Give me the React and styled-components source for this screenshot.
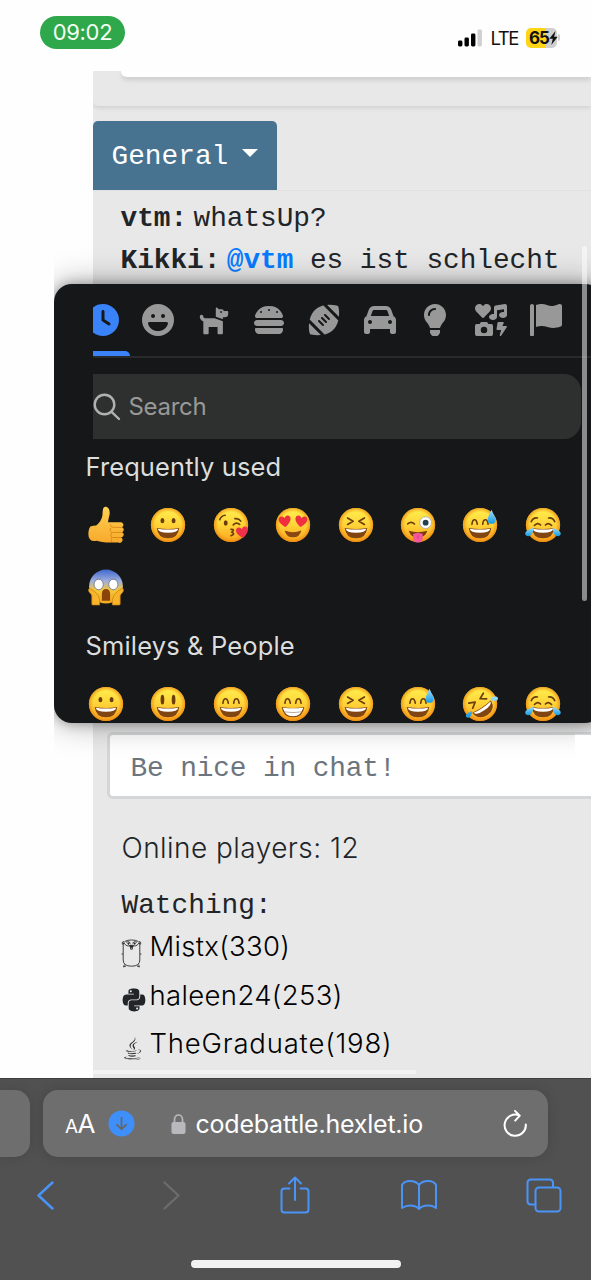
import React from "react";
import styled, { createGlobalStyle } from "styled-components";
import { FaClock, FaFaceLaugh, FaBurger, FaFootball, FaCar, FaPython, FaJava } from "react-icons/fa6";
import { FaDog, FaLightbulb, FaIcons } from "react-icons/fa";

const Global = createGlobalStyle`
  html, body { margin: 0; background: #fefefe; }
  * { box-sizing: border-box; }
  svg { display: block; flex: none; }
`;
const SANS = `Inter, "Liberation Sans", sans-serif`;
const MONO = `"Liberation Mono", monospace`;

const Screen = styled.div`
  position: relative;
  display: flex;
  flex-direction: column;
  width: 591px;
  height: 1280px;
  overflow: hidden;
  background: #fefefe;
  font-family: ${SANS};
`;

/* ---- status bar ---- */
const StatusBar = styled.header`
  display: flex;
  justify-content: space-between;
  align-items: flex-start;
  height: 71px;
  padding: 16px 31px 0 40px;
  flex: none;
`;
const Clock = styled.div`
  width: 85px;
  height: 33px;
  border-radius: 17px;
  background: #2fa84c;
  color: #f4fff4;
  font-size: 22px;
  line-height: 33px;
  text-align: center;
  letter-spacing: -0.35px;
`;
const Status = styled.div`
  display: flex;
  align-items: center;
  margin-top: 11px;
  height: 21px;
`;
const Carrier = styled.span`
  width: 34px;
  padding-left: 6.5px;
  font-size: 18.5px;
  letter-spacing: -1.4px;
  color: #111;
  white-space: nowrap;
`;
const Battery = styled.div`
  display: flex;
  align-items: center;
  width: 31px;
  height: 20px;
  margin-left: 8px;
  padding-left: 3px;
  border-radius: 5px;
  background: linear-gradient(90deg, #ffd414 65%, #cfcfcf 65%);
  font-size: 17px;
  font-weight: 700;
  letter-spacing: -1.1px;
  color: #111;
`;
const BatteryTip = styled.div`
  width: 2px;
  height: 7px;
  margin-left: 1px;
  border-radius: 0 2px 2px 0;
  background: #cfcfcf;
`;

/* ---- page ---- */
const Page = styled.main`
  display: flex;
  flex-direction: column;
  height: 1007px;
  margin-left: 92.5px;
  overflow: hidden;
  background: #e8e8e8;
  flex: none;
`;
const TopPanel = styled.div`
  height: 35px;
  padding-left: 28px;
  overflow: visible;
  border-bottom-left-radius: 5px;
  box-shadow: 0 2px 4px rgba(0, 0, 0, 0.1);
  flex: none;
`;
const TopCard = styled.div`
  height: 6px;
  border-bottom-left-radius: 6px;
  background: #fff;
  box-shadow: 0 3px 5px rgba(0, 0, 0, 0.12);
`;
const TabStrip = styled.div`
  display: flex;
  height: 85px;
  padding-top: 15px;
  border-bottom: 1px solid #e1e1e1;
  flex: none;
`;
const RoomTab = styled.button`
  display: flex;
  align-items: center;
  width: 184.5px;
  height: 69px;
  padding: 2px 0 0 19px;
  border: 0;
  border-radius: 5px 5px 0 0;
  background: #477391;
  color: #fff;
  font: 27.8px/42px ${MONO};
  gap: 14px;
`;
const Caret = styled.i`
  border: 8.5px solid transparent;
  border-top: 8.5px solid #fff;
  border-bottom: 0;
  margin-bottom: 8px;
`;
const Messages = styled.div`
  height: 541px;
  padding: 7px 0 0 28px;
  flex: none;
`;
const Message = styled.div`
  display: flex;
  gap: 6.5px;
  height: 41.7px;
  font: 27.8px/41.7px ${MONO};
  letter-spacing: -0.05px;
  color: #212529;
  white-space: pre;
`;
const Mention = styled.b`
  color: #077bff;
`;
const ChatInput = styled.div`
  width: 520px;
  height: 67px;
  margin-left: 14px;
  padding-left: 21px;
  border: 3px solid #d5d6d7;
  border-radius: 6px;
  background: #fff;
  color: #6c757d;
  font: 27.8px/67px ${MONO};
  letter-spacing: -0.12px;
  flex: none;
`;
const Players = styled.section`
  display: flex;
  flex-direction: column;
  padding: 28px 0 0 29px;
  color: #212529;
  flex: none;
`;
const Online = styled.div`
  height: 42px;
  font-size: 28px;
  line-height: 42px;
  font-weight: 300;
  letter-spacing: 0.45px;
`;
const Watching = styled.div`
  height: 42px;
  margin: 16px 0 -5px;
  font: 27.8px/42px ${MONO};
`;
const Player = styled.div`
  display: flex;
  align-items: center;
  height: 48.5px;
  font-size: 27.5px;
  font-weight: 300;
  line-height: 42px;
  color: #000;
  letter-spacing: ${(p) => p.$spacing}px;
`;
const LangIcon = styled.span`
  display: flex;
  align-items: center;
  width: 29px;
  margin-left: -1px;
  padding-top: ${(p) => p.$drop || 10}px;
  flex: none;
`;
const ScrollTrack = styled.div`
  width: 323px;
  height: 4px;
  margin: auto 0 4px;
  background: #f2f2f2;
`;

/* ---- emoji picker ---- */
const Picker = styled.div`
  position: absolute;
  left: 54px;
  top: 284px;
  display: flex;
  flex-direction: column;
  width: 549px;
  height: 439px;
  padding-left: 31.5px;
  border-radius: 18px;
  background: #151718;
  box-shadow: 0 0 32px rgba(0, 0, 0, 0.35), 0 0 12px rgba(0, 0, 0, 0.3);
  clip-path: polygon(0 -60px, 100% -60px, 100% 450px, 521px 450px, 521px 500px, 0 500px);
`;
const Tabs = styled.nav`
  display: flex;
  height: 74px;
  margin-left: 7px;
  border-bottom: 2px solid #27292a;
  overflow: hidden;
  flex: none;
`;
const Tab = styled.div`
  display: flex;
  flex-direction: column;
  align-items: center;
  justify-content: space-between;
  width: 55.4px;
  margin-left: ${(p) => (p.$active ? -17.3 : 0)}px;
  padding-top: 20px;
  color: ${(p) => (p.$active ? "#3a82f7" : "#989898")};
  flex: none;
`;
const Marker = styled.div`
  width: 55px;
  height: 5px;
  border-radius: 5px 5px 0 0;
  background: #3a82f7;
`;
const Search = styled.div`
  display: flex;
  align-items: center;
  gap: 8px;
  width: 488px;
  height: 65px;
  margin: 16px 0 0 7px;
  border-radius: 0 17px 17px 0;
  background: #2e302f;
  color: #989998;
  font-size: 24px;
  letter-spacing: -0.3px;
  flex: none;
`;
const Heading = styled.h2`
  height: 56px;
  margin: 0;
  font-size: 25.5px;
  font-weight: 400;
  line-height: 56px;
  letter-spacing: ${(p) => p.$spacing}px;
  color: #dcdddd;
  flex: none;
`;
const EmojiGrid = styled.div`
  display: grid;
  grid-template-columns: repeat(8, 62.4px);
  grid-auto-rows: 62px;
  align-items: center;
  height: ${(p) => p.$rows * 62}px;
  margin: -1px 0 0;
  padding-left: 2.5px;
  flex: none;
`;
const Scrollbar = styled.div`
  position: absolute;
  left: 582px;
  top: 246px;
  width: 5px;
  height: 355px;
  border-radius: 3px;
  background: rgba(255, 255, 255, 0.5);
`;

/* ---- browser chrome ---- */
const Browser = styled.footer`
  display: flex;
  flex-direction: column;
  height: 202px;
  background: #515151;
  border-top: 1px solid #3f3f3f;
  flex: none;
`;
const AddressRow = styled.div`
  display: flex;
  gap: 13px;
  padding-top: 11px;
`;
const PrevTab = styled.div`
  width: 30px;
  height: 67px;
  border-radius: 0 15px 15px 0;
  background: #6e6e6e;
  box-shadow: 0 0 14px rgba(0, 0, 0, 0.12);
`;
const Address = styled.div`
  display: flex;
  align-items: center;
  width: 505px;
  height: 67px;
  padding: 0 21px 0 22px;
  border-radius: 15px;
  background: #6e6e6e;
  box-shadow: 0 0 14px rgba(0, 0, 0, 0.14);
  color: #fff;
`;
const TextSize = styled.span`
  display: flex;
  align-items: baseline;
  width: 43px;
  font-size: 26px;
  letter-spacing: -0.5px;
`;
const SmallA = styled.span`
  font-size: 19px;
`;
const Lock = styled.svg`
  margin-left: 36px;
`;
const Url = styled.span`
  flex: 1;
  margin-left: 9.5px;
  font-size: 25px;
  letter-spacing: -0.22px;
`;
const Toolbar = styled.div`
  display: grid;
  grid-template-columns: 127px 125px 122px 125px 125px;
  justify-content: center;
  justify-items: center;
  align-items: center;
  height: 76px;
  padding-right: 3px;
  color: #4a94f8;
`;
const HomeBar = styled.div`
  width: 210px;
  height: 8px;
  margin: 27px 0 0 191px;
  border-radius: 4px;
  background: #f3f3f3;
`;

/* ---- emoji drawings ---- */
const brown = "#6b3d0c";
const line = { fill: "none", stroke: brown, strokeWidth: 1.7, strokeLinecap: "round", strokeLinejoin: "round" };

const Grin = ({ teeth }) => (
  <g>
    <path d="M6.5 21Q18 23 29.5 21Q28.5 31.5 18 31.5Q7.5 31.5 6.5 21Z" fill="#804512" />
    <path d="M7.6 21.8Q18 23.6 28.4 21.8Q28 25.8 18 25.8Q8 25.8 7.6 21.8Z" fill="#fff" />
    {teeth && <path d="M8 21.8Q18 23.6 28 21.8Q27 30.4 18 30.4Q9 30.4 8 21.8Z" fill="#fff" />}
    {teeth && <path d="M8.8 26Q18 27.6 27.2 26" fill="none" stroke="#9c8268" strokeWidth=".7" />}
  </g>
);
const DotEyes = ({ tall }) => (
  <g fill={brown}>
    <ellipse cx="12.3" cy="13.6" rx={tall ? 1.9 : 2} ry={tall ? 5 : 2.7} />
    <ellipse cx="23.7" cy="13.6" rx={tall ? 1.9 : 2} ry={tall ? 5 : 2.7} />
  </g>
);
const ArcEyes = () => (
  <path {...line} d="M9.8 17.2Q10.2 12.6 12.4 12.6T15.2 17.2M20.8 17.2Q21.2 12.6 23.5 12.6T26.2 17.2" />
);
const Drop = () => <path d="M29.8 2.5C28 7 25.8 9.5 25.8 12.8A4 4 0 0 0 33.8 12.8C33.8 9.5 31.5 7 29.8 2.5Z" fill="url(#water)" />;
const heart = "M0 4.8C-8-.5-5.4-5.6-2-4.9Q-.5-4.6 0-3Q.7-4.6 2-4.9C5.5-5.6 8-.5 0 4.8Z";

const features = {
  grinning: <><DotEyes /><Grin /></>,
  smiley: <><DotEyes tall /><Grin /></>,
  smile: <><ArcEyes /><Grin /></>,
  grin: <><ArcEyes /><Grin teeth /></>,
  squint: <><path {...line} d="M9.4 10.8L15 14.2L9.4 17.4M26.6 10.8L21 14.2L26.6 17.4" /><Grin /></>,
  sweat: <><ArcEyes /><Grin /><Drop /></>,
  kiss: <>
    <ellipse cx="12.6" cy="16" rx="2" ry="2.8" fill={brown} />
    <path {...line} d="M6.5 12.5Q8 8.4 12 8M22 11.5Q26 11 28 14M20.3 17.8Q23.5 14.6 26.8 17.4M18 22.5Q22.5 22.4 18.8 25.4Q23 27 18 29" />
    <path d={heart} transform="translate(29.6 25.8) rotate(-10) scale(1.15)" fill="#ee3048" />
  </>,
  love: <>
    <path d={heart} transform="translate(9.8 14.5) rotate(-8) scale(1.15)" fill="#f0303f" />
    <path d={heart} transform="translate(26.2 14.5) rotate(8) scale(1.15)" fill="#f0303f" />
    <path d="M9.5 23.6Q18 27 26.5 23.6Q25 30.6 18 30.6Q11 30.6 9.5 23.6Z" fill="#8a4712" />
  </>,
  wink: <>
    <path {...line} d="M7.5 16.8Q11 13.6 14.4 17" />
    <circle cx="25.8" cy="15.6" r="6" fill="#fff" stroke="#a8aeb4" strokeWidth=".9" />
    <circle cx="25.8" cy="15.6" r="3" fill="#25404c" />
    <path d="M8.5 24Q18 27 27.5 24Q25.5 31 18 31Q10.5 31 8.5 24Z" fill="#7b3d10" />
    <path d="M13 27.2Q18 25 22.8 27.2V32Q22.2 36 18 36T13 32Z" fill="#f5599c" />
    <path d="M18 28.4V32" stroke="#cc3479" strokeWidth=".9" />
  </>,
  joy: <>
    <path {...line} d="M6 14.5Q8.2 10 12.3 10.8M30 14.5Q27.8 10 23.7 10.8M9.2 18.5Q12.5 14.8 15.5 18M26.8 18.5Q23.5 14.8 20.5 18" />
    <Grin />
    <path d="M8 20.4C8.4 25.6 6.4 29.4 2.8 29.4C-.6 29.4-1 25.8 1.4 24.2C4 22.8 6 22.4 8 20.4ZM28 20.4C27.6 25.6 29.6 29.4 33.2 29.4C36.6 29.4 37 25.8 34.6 24.2C32 22.8 30 22.4 28 20.4Z" fill="url(#water)" />
  </>,
  rofl: <>
    <g transform="rotate(-34 18 18)">
      <path {...line} d="M9 10.8L15 13.6L9.4 17.4M27 10.8L21 13.6L26.6 17.4" />
      <Grin />
    </g>
    <path d="M28.4 13C30.5 9.6 36.2 9.8 36.4 12.2C36.6 15.4 31.8 16 28.4 13ZM9.6 25.2C10.6 29.2 7.4 33 4.8 31.8C1.6 30.2 5 26.8 9.6 25.2Z" fill="url(#water)" />
  </>,
};

const Emoji = ({ name }) => (
  <svg width="36" height="36" viewBox="-.4 -.4 36.8 36.8" overflow="visible">
    {name === "thumb" && (
      <g>
        <path d="M2 19.5Q5 18.6 8 18.6Q13.5 14 14.4 8C14.6 3.8 14.6 0 17 -.6C20.6-1.4 22.4 3.6 21.6 7.5Q20.6 11.4 20 15.2H32.6A2.7 2.7 0 0 1 34.4 20.2A2.8 2.8 0 0 1 34.4 25.4A2.7 2.7 0 0 1 33.2 30.6A2.6 2.6 0 0 1 30.5 36H18Q12 35.6 8.5 34.2Q0 35.8 0 27.5Q0 22 2 19.5Z" fill="url(#hand)" />
        <path d="M34 20.4H25.5Q22.8 20.2 22.4 17.4M34 25.6H24.5M33 30.8H24.5M23.6 20.8Q20.6 23 24 25.6Q21.4 28 24.2 30.8Q22 33 24 35.4" fill="none" stroke="#d98a14" strokeWidth="1" />
      </g>
    )}
    {name === "scream" && (
      <g>
        <circle cx="18" cy="17.5" r="17.3" fill="url(#fear)" />
        <g fill="#fff" stroke="#6f7584" strokeWidth=".9">
          <ellipse cx="10.5" cy="15.4" rx="4.7" ry="5.4" />
          <ellipse cx="25.5" cy="15.4" rx="4.7" ry="5.4" />
        </g>
        <path d="M13.8 25.5Q13.8 20 18 20T22.2 25.5V32H13.8Z" fill="#8a4308" />
        <path d="M3.5 35.5V26Q-1.6 22 1 19.4Q6 21 10 26.5Q12.4 31 11.5 36.4H4ZM32.5 35.5V26Q37.6 22 35 19.4Q30 21 26 26.5Q23.6 31 24.5 36.4H32Z" fill="#f7b52c" stroke="#c97c11" strokeWidth=".7" />
      </g>
    )}
    {features[name] && (
      <g>
        <circle cx="18" cy="18" r="17.5" fill="url(#face)" />
        <circle cx="18" cy="18" r="17.5" fill="url(#rim)" />
        {features[name]}
      </g>
    )}
  </svg>
);
const PaintDefs = styled.svg`
  position: absolute;
`;
const Paints = () => (
  <PaintDefs width="0" height="0">
    <defs>
      <linearGradient id="face" x2="0" y2="1"><stop stopColor="#fff04f" /><stop offset=".5" stopColor="#ffd338" /><stop offset="1" stopColor="#fba41d" /></linearGradient>
      <radialGradient id="rim"><stop offset=".75" stopColor="#f08c12" stopOpacity="0" /><stop offset="1" stopColor="#ec860c" stopOpacity=".75" /></radialGradient>
      <linearGradient id="hand" x2="0" y2="1"><stop stopColor="#ffd152" /><stop offset="1" stopColor="#f7a92c" /></linearGradient>
      <linearGradient id="fear" x2="0" y2="1"><stop stopColor="#4167cf" /><stop offset=".35" stopColor="#a1b0dd" /><stop offset=".6" stopColor="#f4c63a" /><stop offset="1" stopColor="#f5a91f" /></linearGradient>
      <linearGradient id="water" x2="0" y2="1"><stop stopColor="#9fe0fb" /><stop offset="1" stopColor="#179ae2" /></linearGradient>
    </defs>
  </PaintDefs>
);

const FlagIcon = () => (
  <svg width="32" height="32" viewBox="0 0 512 512" fill="currentColor">
    <path d="M64 496C64 504.8 56.75 512 48 512h-32C7.25 512 0 504.8 0 496V32c0-17.75 14.25-32 32-32s32 14.25 32 32V496zM476.3 0c-6.365 0-13.01 1.35-19.34 4.233c-45.69 20.86-79.56 27.94-107.8 27.94c-59.96 0-94.81-31.86-163.9-31.87C160.9 .3055 131.6 4.867 96 15.75v350.5c32-9.984 59.87-14.1 84.85-14.1c73.63 0 124.9 31.78 198.6 31.78c31.91 0 68.02-5.971 111.1-23.09C504.1 355.9 512 344.4 512 332.1V30.73C512 11.1 495.3 0 476.3 0z" />
  </svg>
);
const categories = [FaFaceLaugh, FaDog, FaBurger, FaFootball, FaCar, FaLightbulb, FaIcons];
const frequent = ["thumb", "grinning", "kiss", "love", "squint", "wink", "sweat", "joy", "scream"];
const people = ["grinning", "smiley", "smile", "grin", "squint", "sweat", "rofl", "joy"];

const Gopher = () => (
  <svg width="21" height="29" viewBox="0 0 21 29" fill="none" stroke="#2b2d30" strokeWidth=".9">
    <path d="M2.2 6Q2 1 10.5 1T18.8 6V21Q18.8 27.2 10.5 27.2T2.2 21Z" />
    <path d="M3 4Q6 8.6 9.4 6M18 4Q15 8.6 11.6 6M5 3.2Q7.5 1.6 9.6 4.2M16 3.2Q13.5 1.6 11.4 4.2" />
    <path d="M3 2.5Q.4 2.4 1.4 5.5M18 2.5Q20.6 2.4 19.6 5.5M2 15H.6M19 15H20.4M3.4 25.5L2.6 28L5 27M17.6 25.5L18.4 28L16 27" />
    <ellipse cx="10.5" cy="7.4" rx="1.7" ry="1.1" fill="#222" /><path d="M9.6 8.6V10.2H11.4V8.6" />
    <circle cx="7.5" cy="4.6" r=".7" fill="#222" /><circle cx="13.6" cy="4.6" r=".7" fill="#222" />
  </svg>
);
const stroke = (w) => ({ fill: "none", stroke: "currentColor", strokeWidth: w, strokeLinecap: "round", strokeLinejoin: "round" });

export default function App() {
  return (
    <Screen>
      <Global />
      <Paints />
      <StatusBar>
        <Clock>09:02</Clock>
        <Status>
          <svg width="26" height="18" viewBox="0 0 26 18">
            <rect x="0" y="11.5" width="4.4" height="6" rx="1.4" /><rect x="6.5" y="8.5" width="4.4" height="9" rx="1.4" />
            <rect x="13" y="4.5" width="4.4" height="13" rx="1.4" /><rect x="19.5" y=".5" width="4.4" height="17" rx="1.4" fill="#d0d0d0" />
          </svg>
          <Carrier>LTE</Carrier>
          <Battery>
            65
            <svg width="9" height="14" viewBox="0 0 9 14"><path d="M6.5 0L.3 7.8H3.8L2.3 14L8.7 5.8H5.1Z" fill="#111" /></svg>
          </Battery>
          <BatteryTip />
        </Status>
      </StatusBar>

      <Page>
        <TopPanel><TopCard /></TopPanel>
        <TabStrip><RoomTab>General<Caret /></RoomTab></TabStrip>
        <Messages>
          <Message><b>vtm:</b><span>whatsUp?</span></Message>
          <Message><b>Kikki:</b><span><Mention>@vtm</Mention> es ist schlecht</span></Message>
        </Messages>
        <ChatInput>Be nice in chat!</ChatInput>
        <Players>
          <Online>Online players: 12</Online>
          <Watching>Watching:</Watching>
          <Player $spacing={0.3}><LangIcon $drop={14}><Gopher /></LangIcon>Mistx(330)</Player>
          <Player $spacing={0.35}><LangIcon><FaPython size={26} color="#212529" /></LangIcon>haleen24(253)</Player>
          <Player $spacing={0.8}><LangIcon><FaJava size={23} color="#2b2d30" /></LangIcon>TheGraduate(198)</Player>
        </Players>
        <ScrollTrack />
      </Page>

      <Browser>
        <AddressRow>
          <PrevTab />
          <Address>
            <TextSize><SmallA>A</SmallA>A</TextSize>
            <svg width="27" height="27" viewBox="0 0 27 27">
              <circle cx="13.5" cy="13.5" r="13" fill="#3f8ffb" />
              <path d="M13.5 7.5V19M8.8 14.6L13.5 19.2L18.2 14.6" fill="none" stroke="#666" strokeWidth="1.7" strokeLinecap="round" />
            </svg>
            <Lock width="15" height="20" viewBox="0 0 15 20">
              <rect x=".5" y="8" width="14" height="12" rx="2" fill="#b9b9bd" />
              <path d="M3.5 9V5.2A4 4.2 0 0 1 11.5 5.2V9" fill="none" stroke="#b9b9bd" strokeWidth="1.7" />
            </Lock>
            <Url>codebattle.hexlet.io</Url>
            <svg width="24" height="28" viewBox="0 0 24 28" {...stroke(2)}>
              <path d="M22.8 14.5A10.6 10.6 0 1 1 16.6 5.6M12 .9L16.8 5.6L12.2 10.6" />
            </svg>
          </Address>
        </AddressRow>
        <Toolbar>
          <svg width="19" height="29" viewBox="0 0 19 29" {...stroke(2.4)}><path d="M16.5 1.5L2.5 14.5L16.5 27.5" /></svg>
          <svg width="19" height="29" viewBox="0 0 19 29" {...stroke(2.2)} stroke="#6d6d6d"><path d="M2.5 1.5L16.5 14.5L2.5 27.5" /></svg>
          <svg width="30" height="38" viewBox="0 0 30 38" {...stroke(2)}>
            <path d="M9.5 12.5H4.5Q1.5 12.5 1.5 15.5V33.5Q1.5 36.5 4.5 36.5H25.5Q28.5 36.5 28.5 33.5V15.5Q28.5 12.5 25.5 12.5H20.5M15 24V1.5M9 7.5L15 1.5L21 7.5" />
          </svg>
          <svg width="38" height="32" viewBox="0 0 38 32" {...stroke(2)}>
            <path d="M19 6Q16 2 10 2Q4 2 2 6V29Q6 26.5 10 26.5Q16 26.5 19 30Q22 26.5 28 26.5Q33 26.5 36 29V6Q34 2 28 2Q22 2 19 6V30" />
          </svg>
          <svg width="36" height="35" viewBox="0 0 36 35" {...stroke(2)}>
            <path d="M9.5 26.5H5Q1.5 26.5 1.5 23V5Q1.5 1.5 5 1.5H23.5Q27 1.5 27 5V9" />
            <rect x="9.5" y="9.5" width="25" height="24" rx="3.5" />
          </svg>
        </Toolbar>
        <HomeBar />
      </Browser>

      <Picker>
        <Tabs>
          <Tab $active><FaClock size={32} /><Marker /></Tab>
          {categories.map((Icon, i) => <Tab key={i}><Icon size={32} /></Tab>)}
          <Tab><FlagIcon /></Tab>
        </Tabs>
        <Search>
          <svg width="28" height="28" viewBox="0 0 28 28" {...stroke(2.4)} stroke="#b0b1b0"><circle cx="11.5" cy="11.5" r="9.8" /><path d="M18.6 18.8L26 26" /></svg>
          Search
        </Search>
        <Heading $spacing={0.1}>Frequently used</Heading>
        <EmojiGrid $rows={2}>{frequent.map((n) => <Emoji key={n} name={n} />)}</EmojiGrid>
        <Heading $spacing={0.15}>Smileys &amp; People</Heading>
        <EmojiGrid $rows={1}>{people.map((n) => <Emoji key={n} name={n} />)}</EmojiGrid>
      </Picker>
      <Scrollbar />
    </Screen>
  );
}
